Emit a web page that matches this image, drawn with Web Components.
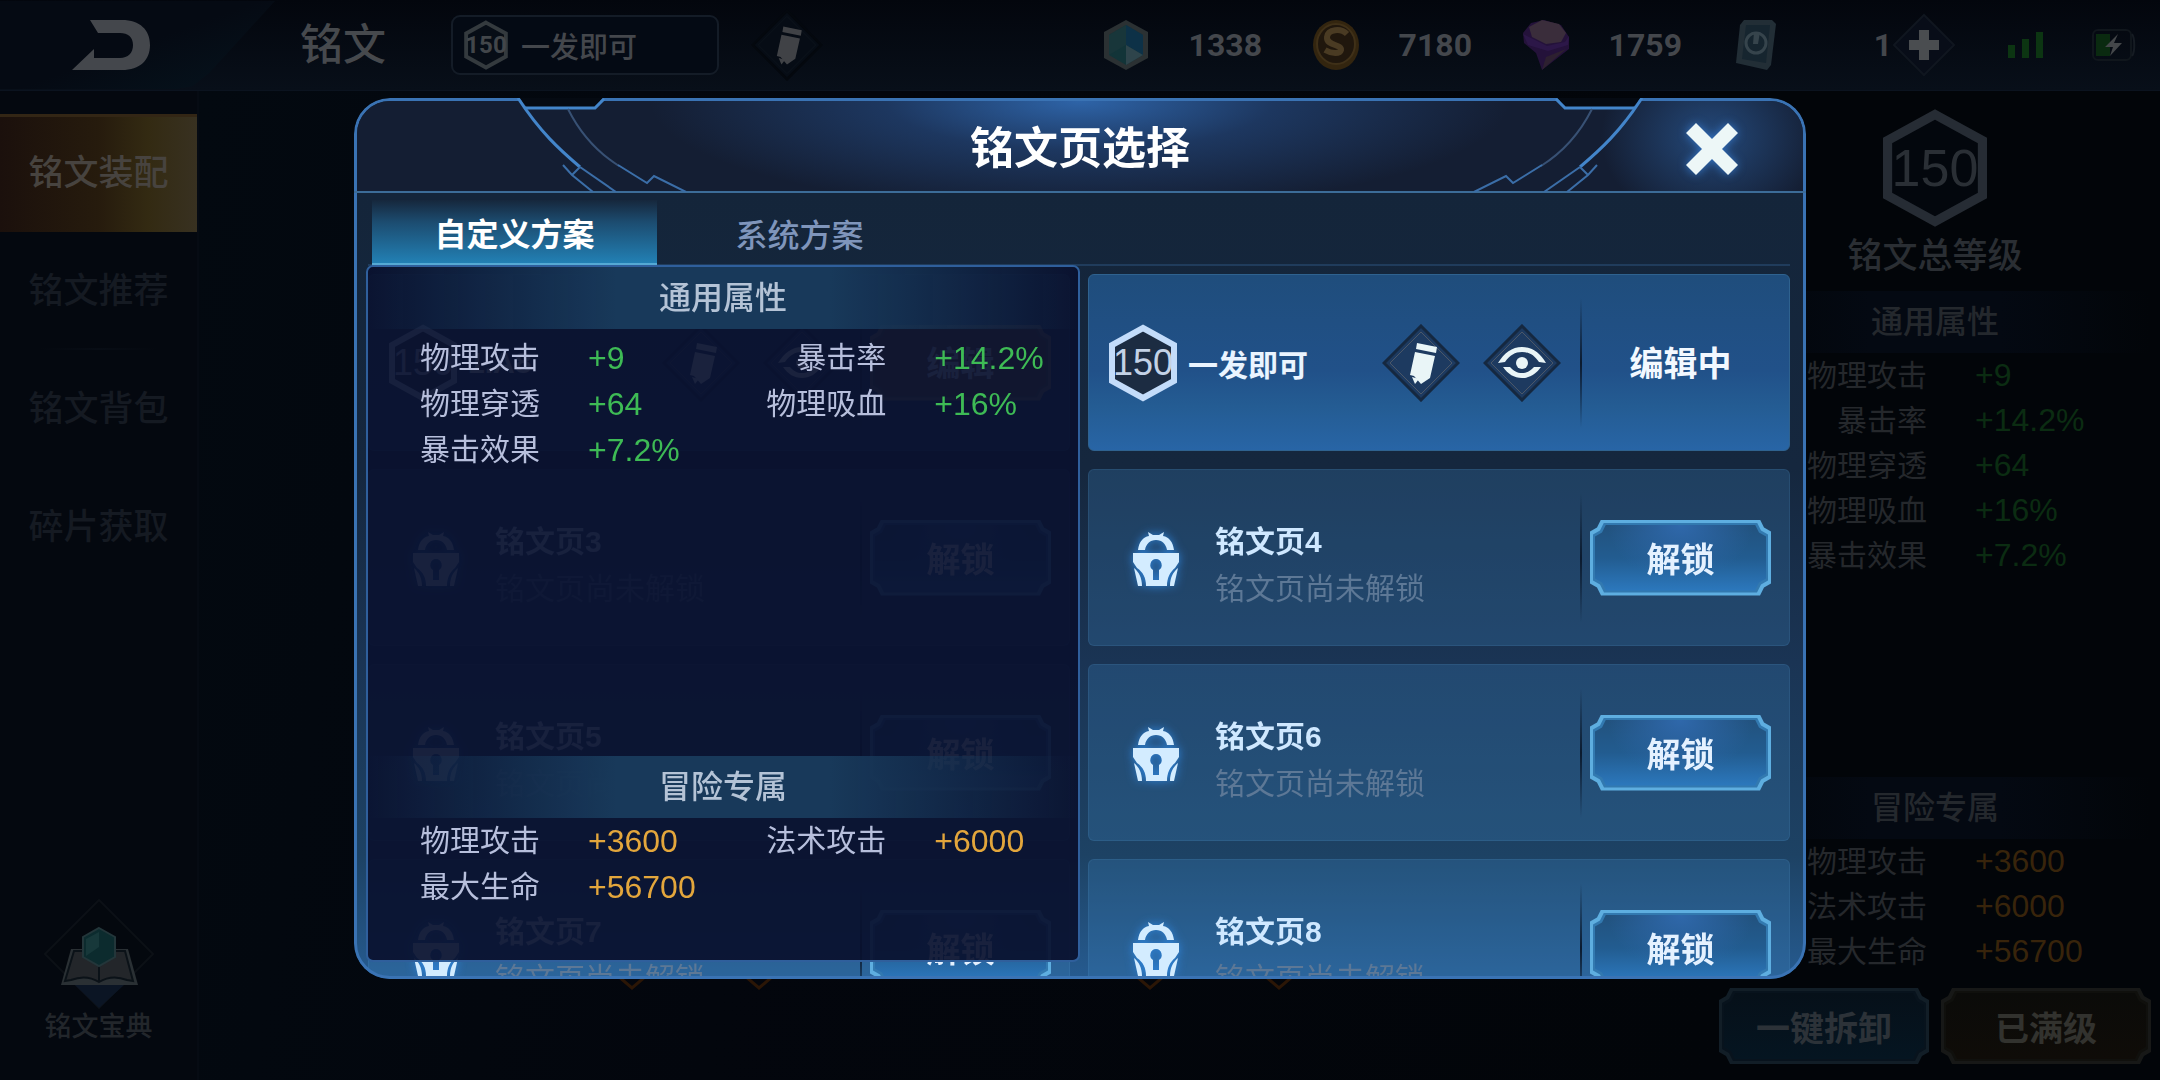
<!DOCTYPE html>
<html lang="zh-CN">
<head>
<meta charset="utf-8">
<meta name="viewport" content="width=device-width, initial-scale=1">
<title>铭文页选择</title>
<style>
  html, body {
    margin: 0;
    height: 100%;
  }
  body {
    background: #03070d;
    color: #44474c;
    font-family: "Liberation Sans", "Noto Sans CJK SC", sans-serif;
    overflow: hidden;
  }
</style>
</head>
<body>
<rune-screen></rune-screen>

<script>
const icons = {
  back: ['0 0 78 50', `<path fill="currentColor" d="M18 0h32c18 0 28 10 28 25s-10 25-28 25H0l22-21v9h26c8 0 13-5 13-13s-5-12-13-12H26z"/>`],
  pencil: ['0 0 78 78', `
    <path d="M39 2 76 39 39 76 2 39z" style="fill: var(--tile, #1d3a60); stroke: var(--tile-edge, #152840)" stroke-width="3"/>
    <path d="M39 8 70 39 39 70 8 39z" fill="none" style="stroke: var(--tile-line, #4b5768)" stroke-width="1"/>
    <g fill="currentColor"><path d="M35 19l20 4-1 6-20-4zM33 28l20 4-5 22-9 6-7-8-4-1z"/><path d="M30 53l7 2-4 5z"/></g>`],
  eye: ['0 0 78 78', `
    <path d="M39 2 76 39 39 76 2 39z" fill="#1d3a60" stroke="#152840" stroke-width="3"/>
    <path d="M39 8 70 39 39 70 8 39z" fill="none" stroke="#4b5768" stroke-width="1"/>
    <g fill="currentColor">
      <path d="M15 39C21 29 29 23 39 23s18 6 24 16l-7-1c-5-7-10-10-17-10s-12 3-17 10z"/>
      <path d="M20 43h7c4 4 7 6 12 6s8-2 12-6h7c-5 7-11 11-19 11s-14-4-19-11z"/>
      <circle cx="39" cy="39" r="6"/>
    </g>`],
  lock: ['0 0 48 56', `
    <g fill="currentColor">
      <path d="M6 18C7 10 11 5 17 4l-1-4 5 3h6l5-3-1 4c6 1 10 6 11 14l-7 0c-1-6-5-10-11-10s-10 4-11 10z"/>
      <path fill-rule="evenodd" d="M1 21h46v9l-4 6c-5 4-8 10-8 18H14c0-8-3-14-9-18l-4-6zM24 27a6 6 0 0 0-3 11v10h6V38a6 6 0 0 0-3-11z"/>
      <path d="M2 36c5 4 8 10 8 18H6zM46 36c-5 4-8 10-8 18h4z"/>
    </g>`],
  close: ['0 0 54 54', `<path fill="currentColor" d="M11 1 27 17 43 1 53 11 37 27 53 43 43 53 27 37 11 53 1 43 17 27 1 11z"/>`],
  plus: ['0 0 64 64', `
    <path d="M32 2 62 32 32 62 2 32z" fill="#080d18" stroke="#10161f" stroke-width="2"/>
    <path d="M27 17h10v10h10v10H37v10H27V37H17V27h10z" fill="currentColor"/>`],
  gem: ['0 0 48 52', `
    <path d="M24 1 46 13v26L24 51 2 39V13z" fill="#2b3133"/>
    <path d="M24 6 41 16v20L24 46 7 36V16z" fill="#123438"/>
    <path d="M24 6v20L7 36V16z" fill="#18363a"/><path d="M24 6l17 10v20L24 26z" fill="#0d3147"/>
    <path d="M24 26l17 10-17 10z" fill="#2e444b"/>`],
  coin: ['0 0 48 52', `
    <ellipse cx="24" cy="26" rx="23" ry="25" fill="#33250f"/>
    <ellipse cx="24" cy="25" rx="19" ry="20" fill="#20170d" stroke="#3f3018" stroke-width="2"/>
    <path d="M35 15c-6-6-19-5-20 3-1 9 15 7 14 13-1 4-9 4-16 0" fill="none" stroke="#4a3b23" stroke-width="6"/>`],
  diamond: ['0 0 48 52', `
    <path d="M1 14 9 4 22 1l17 5 8 12v12L20 51 14 34 2 24z" fill="#24123a"/>
    <path d="M1 15 6 26l20 6 20-6 1-9-4 6-18 4z" fill="#2c1748"/>
    <path d="M7 8 20 1l17 4 7 9-5 9-15 2L10 18z" fill="#3a2d3b"/>
    <path d="M20 51l4-13 20-8z" fill="#2d2030"/>`],
  ticket: ['0 0 48 52', `
    <path d="M12 1h28l4 4-5 41-4 5L4 44l4-38z" fill="#222e36"/>
    <path d="M14 6h24l-4 38-24-4z" fill="#16252f"/>
    <circle cx="24" cy="24" r="10" fill="none" stroke="#36444c" stroke-width="3"/>
    <path d="M22 13h6l-2 12h-5z" fill="#36444c"/>`],
  signal: ['0 0 36 26', `<path fill="#0c3512" d="M0 13h7v13H0zM14 7h7v19h-7zM28 0h7v26h-7z"/>`],
  battery: ['0 0 44 32', `
    <rect x="1" y="1" width="38" height="30" rx="5" fill="none" stroke="#10161c" stroke-width="2"/>
    <path d="M40 5c3 4 3 18 0 22" fill="none" stroke="#161c23" stroke-width="2"/>
    <path d="M4 5h14v22H4z" fill="#0a2a10"/><path d="M26 5 13 18h8l-3 9 12-13h-8z" fill="#44474a"/>`],
  book: ['0 0 110 110', `
    <path d="M55 1 109 55 55 109 1 55z" fill="#04080e" stroke="#0c1016" stroke-width="2"/>
    <path d="M31 86h49L55 109z" fill="#0b1524"/>
    <path d="M27 50h57l10 36H17z" fill="#2a3034"/>
    <path d="M30 52h51l8 30-6-1c-10-4-20-3-28 2-8-5-18-6-28-2l-6 1z" fill="#23262a" stroke="#0b1218" stroke-width="2"/>
    <path d="M55 64v18" stroke="#0b1218" stroke-width="2"/>
    <path d="M55 29 71 38v20L55 67 39 58V38z" fill="#0c2b2e" stroke="#23363a" stroke-width="2"/>
    <path d="M55 33v15L42 57V40z" fill="#17383a"/>`]
};

const icon = (name, width, height = width) => {
  const [box, body] = icons[name];
  return `<svg viewBox="${box}" width="${width}" height="${height}" aria-hidden="true">${body}</svg>`;
};

class BaseElement extends HTMLElement {
  constructor() {
    super();
    this.attachShadow({ mode: 'open' });
  }

  connectedCallback() {
    this.shadowRoot.innerHTML = `
      <style>
        * { box-sizing: border-box; }
        button, input { font: inherit; color: inherit; }
        svg { display: block; flex: none; }
        ${this.styles()}
      </style>
      ${this.render()}
    `;
  }

  styles() { return ''; }
  render() { return '<slot></slot>'; }
}

/* hexagon with the rune level inside */
class LevelHex extends BaseElement {
  styles() {
    return `
      :host { display: inline-grid; place-items: center; flex: none; width: 68px; height: 78px; font-size: 36px; line-height: 1; color: #c3d2e6; }
      :host([size="small"]) { width: 44px; height: 50px; font-size: 24px; font-weight: 700; font-family: Roboto, sans-serif; color: #42464a; --rim: #343a3e; --core: #070d16; }
      :host([size="large"]) { width: 104px; height: 120px; font-size: 52px; color: #2a2f35; --rim: #262c34; --core: #03070d; }
      svg, span { grid-area: 1 / 1; }
      svg { width: 100%; height: 100%; }
      path { fill: var(--core, #1c2c42); stroke: var(--rim, #c3dcfa); stroke-width: 6; }
    `;
  }
  render() {
    return `
      <svg viewBox="0 0 68 78" aria-hidden="true"><path d="M34 4 65 21v36L34 74 3 57V21z"/></svg>
      <span><slot></slot></span>
    `;
  }
}

/* button with notched corners */
class NotchButton extends BaseElement {
  styles() {
    return `
      :host {
        display: block; height: 76px; font-size: 34px; font-weight: 700; color: #e4f1ff;
        --edge: #5eaee0; --line: #3279b0;
        --fill: radial-gradient(ellipse at 50% 0, #2f68ab, transparent 60%), linear-gradient(#22527e, #225c90 50%, #2c78bd);
        --notch: polygon(0 12px, 7px 8px, 11px 0, calc(100% - 11px) 0, calc(100% - 7px) 8px, 100% 12px,
          100% calc(100% - 12px), calc(100% - 7px) calc(100% - 8px), calc(100% - 11px) 100%,
          11px 100%, 7px calc(100% - 8px), 0 calc(100% - 12px));
      }
      :host([tone="gold"]) { --edge: #8c8069; --line: #6b604c; --fill: #76553a; }
      :host([tone="dim"]) { color: #2c3238; --edge: #121e27; --line: #08131d; --fill: linear-gradient(#061019, #051521); }
      :host([tone="dimgold"]) { color: #32322e; --edge: #171817; --line: #10100d; --fill: linear-gradient(#0b0b09, #0f0c08); }
      button {
        position: relative; isolation: isolate; display: block; width: 100%; height: 100%;
        padding: 0; border: 0; background: var(--edge); clip-path: var(--notch); cursor: pointer;
      }
      button::before, button::after { content: ""; position: absolute; clip-path: var(--notch); }
      button::before { inset: 3px; z-index: -2; background: var(--line); }
      button::after { inset: 5px; z-index: -1; background: var(--fill); }
    `;
  }
  render() {
    return `<button type="button"><slot></slot></button>`;
  }
}

class SectionBand extends BaseElement {
  styles() {
    return `
      :host {
        display: block; line-height: 62px; text-align: center; font-size: 32px; font-weight: 500; color: #b4c3d6;
        background: linear-gradient(90deg, transparent, #18395a 35%, #18395a 65%, transparent);
      }
      :host([dim]) { color: #24282d; background: linear-gradient(90deg, transparent, #040912 35%, #040912 65%, transparent); }
    `;
  }
}

class StatItem extends BaseElement {
  styles() {
    return `
      :host { display: flex; gap: 48px; line-height: 46px; font-size: 30px; color: #b7bfdc; }
      span { width: 120px; text-align: right; white-space: nowrap; }
      b { font-size: 32px; font-weight: 400; color: var(--value); }
    `;
  }
  render() {
    return `<span>${this.getAttribute('label')}</span><b>${this.getAttribute('value')}</b>`;
  }
}

const commonStats = [
  ['物理攻击', '+9'], ['暴击率', '+14.2%'], ['物理穿透', '+64'], ['物理吸血', '+16%'], ['暴击效果', '+7.2%']
];
const adventureStats = [
  ['物理攻击', '+3600'], ['法术攻击', '+6000'], ['最大生命', '+56700']
];
const statItems = stats => stats.map(([label, value]) => `
  <stat-item label="${label}" value="${value}"></stat-item>
`).join('');

class GameHeader extends BaseElement {
  styles() {
    return `
      :host {
        display: flex; align-items: center; height: 91px; padding-right: 24px;
        background: linear-gradient(#03060d, #080f19); border-bottom: 1px solid #0b131f;
      }
      .back {
        width: 275px; height: 88px; padding: 0 0 0 72px; border: 0; color: #44474c; text-align: left;
        background: linear-gradient(160deg, #050a13 50%, #06141e);
        clip-path: polygon(0 0, 100% 0, 76% 82%, 70% 97%, 64% 100%, 0 100%); cursor: pointer;
      }
      h1 { margin: 0 65px 0 25px; font-size: 43px; line-height: 60px; font-weight: 500; color: #46494d; }
      .page {
        display: flex; align-items: center; gap: 13px; width: 268px; height: 60px; margin-right: 32px; padding: 0 11px;
        font-size: 29px; font-weight: 500; border: 2px solid #141c27; border-radius: 9px; background: #040a14; cursor: pointer;
      }
      .edit {
        padding: 0; border: 0; background: none; color: #404246; cursor: pointer;
        --tile: #060c15; --tile-edge: #04080e; --tile-line: #0d131b;
      }
      .wallet { display: flex; gap: 50px; margin-left: auto; }
      .coin { display: flex; align-items: center; justify-content: space-between; width: 160px; font: 700 32px/50px Roboto, sans-serif; }
      .add { padding: 0; border: 0; background: none; color: #4a4d50; margin-right: 52px; cursor: pointer; }
      .signal { margin-right: 48px; }
    `;
  }
  render() {
    const wallet = [['gem', 1338], ['coin', 7180], ['diamond', 1759], ['ticket', 1]];
    return `
      <button class="back" type="button" aria-label="返回">${icon('back', 78, 50)}</button>
      <h1>铭文</h1>
      <button class="page" type="button"><level-hex size="small">150</level-hex>一发即可</button>
      <button class="edit" type="button" aria-label="改名">${icon('pencil', 72)}</button>
      <div class="wallet">
        ${wallet.map(([name, amount]) => `<div class="coin">${icon(name, 48, 52)}<span>${amount}</span></div>`).join('')}
      </div>
      <button class="add" type="button" aria-label="添加">${icon('plus', 64)}</button>
      <div class="signal">${icon('signal', 36, 26)}</div>
      ${icon('battery', 44, 32)}
    `;
  }
}

class SideMenu extends BaseElement {
  styles() {
    return `
      :host {
        display: flex; flex-direction: column; justify-content: space-between; width: 199px; flex: none;
        padding: 23px 0 35px; background: #04080f; border-right: 2px solid #060b13;
      }
      nav { display: flex; flex-direction: column; }
      a {
        line-height: 118px; text-align: center; font-size: 35px; font-weight: 500; color: #151a22; text-decoration: none;
      }
      a:nth-child(2) { background: linear-gradient(90deg, transparent 20%, #080d15, transparent 80%) bottom / 100% 2px no-repeat; }
      a[aria-current] {
        color: #47433f; background: linear-gradient(90deg, #1b100c, #261b0d 50%, #332a12 75%, #383121);
        box-shadow: inset 0 3px #332615;
      }
      .book { display: flex; flex-direction: column; align-items: center; font-size: 27px; line-height: 36px; color: #22262b; background: none; }
    `;
  }
  render() {
    const items = ['铭文装配', '铭文推荐', '铭文背包', '碎片获取'];
    return `
      <nav>${items.map((item, i) => `<a href="#"${i ? '' : ' aria-current="page"'}>${item}</a>`).join('')}</nav>
      <a class="book" href="#">${icon('book', 110)}铭文宝典</a>
    `;
  }
}

class RuneBoard extends BaseElement {
  styles() {
    return `
      :host {
        display: flex; align-items: flex-end; justify-content: center; flex: 1; padding-bottom: 88px;
        background: linear-gradient(100deg, #030910, #03060d 40%, #020509);
      }
      path { fill: none; stroke: #2b1606; stroke-width: 3; }
    `;
  }
  render() {
    return `<svg viewBox="0 0 680 16" width="680" height="16" aria-hidden="true">
      ${[17, 144, 535, 664].map(x => `<path d="M${x - 14} 0l14 12 14-12"/>`).join('')}
    </svg>`;
  }
}

class TotalPanel extends BaseElement {
  styles() {
    return `
      :host { display: flex; flex-direction: column; width: 450px; flex: none; padding: 17px 9px 16px; background: #020509; }
      level-hex { align-self: center; }
      h2 { margin: 0; padding-bottom: 8px; text-align: center; font-size: 35px; line-height: 55px; font-weight: 500; color: #2a2e33; }
      .list { --value: #0b2c12; padding-left: 88px; }
      .list stat-item { color: #25282c; line-height: 45px; }
      .gold { --value: #38240b; padding-bottom: 14px; }
      .adventure { margin-top: auto; }
      footer { display: grid; grid-template-columns: 1fr 1fr; gap: 12px; }
    `;
  }
  render() {
    return `
      <level-hex size="large">150</level-hex>
      <h2>铭文总等级</h2>
      <section-band dim>通用属性</section-band>
      <div class="list">${statItems(commonStats)}</div>
      <section-band class="adventure" dim>冒险专属</section-band>
      <div class="list gold">${statItems(adventureStats)}</div>
      <footer>
        <notch-button tone="dim">一键拆卸</notch-button>
        <notch-button tone="dimgold">已满级</notch-button>
      </footer>
    `;
  }
}

class PageCard extends BaseElement {
  styles() {
    return `
      :host {
        display: flex; align-items: center; height: 177px; padding: 0 18px 0 20px; border-radius: 6px;
        background: rgba(60, 130, 190, .27); border: 1px solid rgba(90, 150, 200, .16);
      }
      :host([open]) { background: linear-gradient(#1f4d7c, #215189 55%, #245c93 75%, #2865a6); border-color: #2f628f; }
      .name { flex: 1; padding-left: 11px; font-size: 30px; font-weight: 700; color: #eaf4ff; }
      .icons { display: flex; gap: 23px; margin-right: 19px; }
      .icons button { padding: 0; border: 0; background: none; color: #e9f5f7; cursor: pointer; }
      .lock { margin: 4px 35px 0 23px; color: #d3ecff; filter: drop-shadow(0 0 5px #2f87e0); }
      .text { flex: 1; padding-top: 14px; line-height: 47px; font-size: 30px; color: #5d7896; }
      .text strong { display: block; font-weight: 700; color: #cfe8ff; }
      .text strong, .text span { white-space: nowrap; }
      .side { display: grid; width: 191px; padding-left: 10px; position: relative; }
      .side::before {
        content: ""; position: absolute; left: 0; top: 50%; width: 2px; height: 130px; margin-top: -65px;
        background: linear-gradient(transparent, #0b1a2e 50%, transparent);
      }
      .state { height: 76px; line-height: 78px; text-align: center; font-size: 34px; font-weight: 700; color: #f2f8ff; }
    `;
  }
  render() {
    const name = this.getAttribute('name');
    if (this.hasAttribute('locked')) {
      return `
        <div class="lock">${icon('lock', 48, 56)}</div>
        <div class="text"><strong>${name}</strong><span>铭文页尚未解锁</span></div>
        <div class="side"><slot></slot></div>
      `;
    }
    return `
      <level-hex>150</level-hex>
      <div class="name">${name}</div>
      <div class="icons">
        <button type="button" aria-label="改名">${icon('pencil', 78)}</button>
        <button type="button" aria-label="查看">${icon('eye', 78)}</button>
      </div>
      <div class="side"><div class="state"><slot></slot></div></div>
    `;
  }
}

/* attributes of the previewed page, floats over the left column of cards */
class StatPreview extends BaseElement {
  styles() {
    return `
      :host {
        display: flex; flex-direction: column; padding-bottom: 50px; border: 2px solid #2f5f9c; border-radius: 7px;
        background: rgba(10, 17, 46, .93); --value: #3ebb55;
      }
      .grid { display: grid; grid-template-columns: 10fr 9fr; padding: 6px 0 0 52px; }
      .gold { --value: #e3a63c; padding-top: 0; }
      .adventure { margin-top: auto; }
    `;
  }
  render() {
    return `
      <section-band>通用属性</section-band>
      <div class="grid">${statItems(commonStats)}</div>
      <section-band class="adventure">冒险专属</section-band>
      <div class="grid gold">${statItems(adventureStats)}</div>
    `;
  }
}

class PageDialog extends BaseElement {
  styles() {
    return `
      :host {
        position: relative; display: flex; flex-direction: column; flex: 1; overflow: hidden; border-radius: 36px;
        background: linear-gradient(#14253a 94px, #15273e 42%, #1a3454 64%, #1d4264 86%, #265b90);
      }
      :host::after {
        content: ""; position: absolute; inset: 0; z-index: 2; border: 3px solid #3a73b4; border-radius: 36px; pointer-events: none;
      }
      header {
        position: relative; z-index: 3; display: grid; grid-template-columns: 346px 1fr 346px; height: 95px;
        border-bottom: 2px solid #3c6c98;
      }
      header::before {
        content: ""; position: absolute; inset: 3px 3px 0; z-index: -1; border-radius: 33px 33px 0 0;
        background:
          radial-gradient(ellipse 430px 110px at 50% 0, #2e64a8, rgba(38, 80, 140, .5) 45%, transparent),
          radial-gradient(ellipse 110px 90px at calc(100% - 92px) 40%, #24497a, transparent),
          #141e33;
      }
      h2 { margin: 0; text-align: center; font-size: 44px; line-height: 102px; font-weight: 700; color: #fff; }
      .ornament { grid-row: 1; grid-column: 1; fill: none; stroke: #3b6ea8; stroke-width: 2; }
      .right { grid-column: 3; transform: scaleX(-1); }
      .ornament .hole { fill: #050a12; stroke: none; }
      .ornament .bright { stroke: #4385ca; stroke-width: 3; }
      .ornament .faint { stroke: #385174; }
      .close {
        grid-row: 1; grid-column: 3; place-self: center end; margin-right: 67px; padding: 0; border: 0; background: none;
        color: #edf7f7; filter: drop-shadow(0 0 5px #3474c4); cursor: pointer; z-index: 1;
      }
      .tabs { display: flex; margin: 7px 16px 0 14px; padding-left: 4px; border-bottom: 2px solid #203c5c; }
      .tabs button {
        width: 285px; height: 66px; margin-bottom: -2px; padding: 0; border: 0; background: none;
        font-size: 32px; font-weight: 500; color: #7f95bb; cursor: pointer;
      }
      .tabs button[aria-selected="true"] {
        color: #fff; font-weight: 700; border-bottom: 3px solid #55a9d4;
        background: linear-gradient(#16273c, #1c4c70 35%, #2280b4);
      }
      main { position: relative; flex: 1; min-height: 0; padding: 8px 16px 0 14px; }
      .cards { display: grid; grid-template-columns: 1fr 1fr; gap: 18px; }
      stat-preview { position: absolute; top: -1px; bottom: 17px; left: 12px; width: 714px; max-width: 50%; }
    `;
  }
  render() {
    const ornament = side => `
      <svg class="ornament ${side}" viewBox="0 0 346 94" width="346" height="94" aria-hidden="true">
        <path class="hole" d="M165 0h84l-9 9h-67z"/>
        <path class="bright" d="M164 0C186 34 206 52 226 69"/>
        <path d="M226 69 262 94M226 69l-8 8M209 67l9 10 21 17"/>
        <path class="bright" d="M171 10h70l9-9"/>
        <path class="faint" d="M214 11c10 20 24 40 51 57"/>
        <path d="M264 67l29 18 7-7 32 16"/>
      </svg>
    `;
    return `
      <header>
        ${ornament('left')}
        <h2>铭文页选择</h2>
        ${ornament('right')}
        <button class="close" type="button" aria-label="关闭">${icon('close', 54)}</button>
      </header>
      <div class="tabs" role="tablist">
        <button type="button" role="tab" aria-selected="true">自定义方案</button>
        <button type="button" role="tab" aria-selected="false">系统方案</button>
      </div>
      <main>
        <div class="cards"><slot></slot></div>
        <stat-preview></stat-preview>
      </main>
    `;
  }
}

class RuneScreen extends BaseElement {
  styles() {
    return `
      :host { display: flex; flex-direction: column; height: 100vh; }
      .body { display: flex; flex: 1; min-height: 0; }
      .overlay { position: fixed; inset: 0; display: flex; padding: 98px 354px 101px; }
    `;
  }
  render() {
    const locked = [3, 4, 5, 6, 7, 8];
    return `
      <game-header></game-header>
      <div class="body">
        <side-menu></side-menu>
        <rune-board></rune-board>
        <total-panel></total-panel>
      </div>
      <div class="overlay">
        <page-dialog role="dialog" aria-label="铭文页选择">
          <page-card name="1.A8"><notch-button tone="gold">编辑</notch-button></page-card>
          <page-card name="一发即可" open>编辑中</page-card>
          ${locked.map(n => `
            <page-card name="铭文页${n}" locked><notch-button>解锁</notch-button></page-card>
          `).join('')}
        </page-dialog>
      </div>
    `;
  }
}

customElements.define('level-hex', LevelHex);
customElements.define('notch-button', NotchButton);
customElements.define('section-band', SectionBand);
customElements.define('stat-item', StatItem);
customElements.define('game-header', GameHeader);
customElements.define('side-menu', SideMenu);
customElements.define('rune-board', RuneBoard);
customElements.define('total-panel', TotalPanel);
customElements.define('page-card', PageCard);
customElements.define('stat-preview', StatPreview);
customElements.define('page-dialog', PageDialog);
customElements.define('rune-screen', RuneScreen);
</script>
</body>
</html>
